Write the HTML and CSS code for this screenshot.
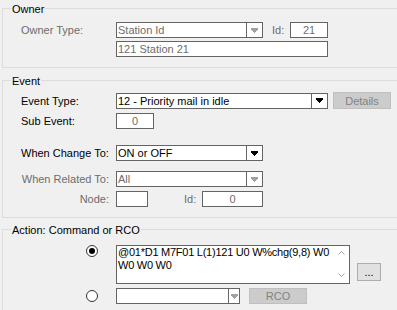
FILE: index.html
```html
<!DOCTYPE html>
<html>
<head>
    <link rel="stylesheet" href="styles.css">
</head>
<body>
<fieldset class="group group-owner">
    <legend>Owner</legend>
    <div class="group-body owner-body">
        <div class="row">
            <span class="label disabled">Owner Type:</span>
            <div class="combo combo-mid is-disabled">
                <span class="combo-text">Station Id</span>
                <span class="combo-btn">
                    <svg width="7" height="5" viewBox="0 0 7 5"><rect x="0" y="0" width="7" height="2"/><rect x="1" y="2" width="5" height="1"/><rect x="2" y="3" width="3" height="1"/><rect x="3" y="4" width="1" height="1"/></svg>
                </span>
            </div>
            <span class="label-id disabled">Id:</span>
            <div class="field field-id is-disabled">21</div>
        </div>
        <div class="row row-station">
            <div class="field field-wide is-disabled text-left">121 Station 21</div>
        </div>
    </div>
</fieldset>

<fieldset class="group group-event">
    <legend>Event</legend>
    <div class="group-body event-body">
        <div class="row row-type">
            <span class="label">Event Type:</span>
            <div class="combo combo-wide">
                <span class="combo-text">12 - Priority mail in idle</span>
                <span class="combo-btn">
                    <svg width="7" height="5" viewBox="0 0 7 5"><rect x="0" y="0" width="7" height="2"/><rect x="1" y="2" width="5" height="1"/><rect x="2" y="3" width="3" height="1"/><rect x="3" y="4" width="1" height="1"/></svg>
                </span>
            </div>
            <button class="btn btn-details" disabled>Details</button>
        </div>
        <div class="row row-sub">
            <span class="label">Sub Event:</span>
            <div class="field field-sub is-disabled">0</div>
        </div>
        <div class="row row-change">
            <span class="label">When Change To:</span>
            <div class="combo combo-mid">
                <span class="combo-text">ON or OFF</span>
                <span class="combo-btn">
                    <svg width="7" height="5" viewBox="0 0 7 5"><rect x="0" y="0" width="7" height="2"/><rect x="1" y="2" width="5" height="1"/><rect x="2" y="3" width="3" height="1"/><rect x="3" y="4" width="1" height="1"/></svg>
                </span>
            </div>
        </div>
        <div class="row row-related">
            <span class="label label-right disabled">When Related To:</span>
            <div class="combo combo-mid is-disabled">
                <span class="combo-text">All</span>
                <span class="combo-btn">
                    <svg width="7" height="5" viewBox="0 0 7 5"><rect x="0" y="0" width="7" height="2"/><rect x="1" y="2" width="5" height="1"/><rect x="2" y="3" width="3" height="1"/><rect x="3" y="4" width="1" height="1"/></svg>
                </span>
            </div>
        </div>
        <div class="row row-node">
            <span class="label label-right disabled">Node:</span>
            <div class="field field-node"></div>
            <span class="label-id label-node-id disabled">Id:</span>
            <div class="field field-node-id is-disabled">0</div>
        </div>
    </div>
</fieldset>

<fieldset class="group group-action">
    <legend>Action: Command or RCO</legend>
    <div class="group-body action-body">
        <div class="row row-command">
            <input type="radio" class="radio radio-top" name="action" checked>
            <div class="memo">
                <div class="memo-text">@01*D1 M7F01 L(1)121 U0 W%chg(9,8) W0 W0 W0 W0</div>
                <div class="memo-scroll">
                    <svg width="7" height="4" viewBox="0 0 7 4"><path d="M0.5 3.5 L3.5 0.5 L6.5 3.5"/></svg>
                    <svg width="7" height="4" viewBox="0 0 7 4"><path d="M0.5 0.5 L3.5 3.5 L6.5 0.5"/></svg>
                </div>
            </div>
            <button class="btn btn-more">...</button>
        </div>
        <div class="row row-rco">
            <input type="radio" class="radio" name="action">
            <div class="combo combo-rco">
                <span class="combo-text"></span>
                <span class="combo-btn combo-btn-small is-disabled">
                    <svg width="7" height="5" viewBox="0 0 7 5"><rect x="0" y="0" width="7" height="2"/><rect x="1" y="2" width="5" height="1"/><rect x="2" y="3" width="3" height="1"/><rect x="3" y="4" width="1" height="1"/></svg>
                </span>
            </div>
            <button class="btn btn-rco" disabled>RCO</button>
        </div>
    </div>
</fieldset>
</body>
</html>
```

FILE: styles.css
```css
* {
    box-sizing: border-box;
}

html, body {
    margin: 0;
    padding: 0;
}

body {
    width: 397px;
    height: 310px;
    overflow: hidden;
    background: #f0f0f0;
    font-family: "Liberation Sans", Arial, sans-serif;
    font-size: 11px;
    color: #000;
}

/* Group boxes */
.group {
    width: 400px;
    margin: 0 0 0 2px;
    padding: 0;
    border: 1px solid #dcdcdc;
    min-width: 0;
}

.group legend {
    height: 15px;
    line-height: 16px;
    padding: 0 1px;
    margin-left: 8px;
    font-size: 11px;
}

.group-owner {
    margin-top: 1px;
}

.group-event {
    margin-top: 5px;
}

.group-action {
    margin-top: 4px;
}

.group-body {
    padding-left: 18px;
}

.owner-body {
    padding-top: 6px;
    padding-bottom: 10px;
}

.event-body {
    padding-top: 4px;
    padding-bottom: 10px;
}

.action-body {
    padding-top: 8px;
    padding-bottom: 6px;
}

/* Rows */
.row {
    display: flex;
    align-items: center;
    height: 16px;
}

.row-station {
    margin-top: 3px;
    padding-left: 95px;
}

.row-type {
    height: 17px;
}

.row-sub {
    margin-top: 4px;
}

.row-change {
    margin-top: 16px;
}

.row-related {
    margin-top: 10px;
}

.row-node {
    margin-top: 4px;
}

.row-command {
    height: 39px;
    align-items: flex-start;
}

.row-rco {
    margin-top: 4px;
}

/* Labels */
.label {
    width: 95px;
    flex-shrink: 0;
    white-space: nowrap;
}

.label-right {
    text-align: right;
    padding-right: 7px;
}

.label-id {
    width: 18px;
    margin-left: 9px;
}

.label-node-id {
    margin-left: 36px;
}

.disabled {
    color: #6d6d6d;
}

/* Text fields */
.field {
    height: 16px;
    line-height: 14px;
    border: 1px solid #646464;
    background: #fff;
    text-align: center;
    white-space: nowrap;
}

.field.is-disabled {
    color: #6d6d6d;
}

.text-left {
    text-align: left;
    padding-left: 1px;
}

.field-id {
    width: 38px;
}

.field-wide {
    width: 212px;
}

.field-sub {
    width: 38px;
}

.field-node {
    width: 32px;
}

.field-node-id {
    width: 61px;
}

/* Combo boxes */
.combo {
    display: flex;
    height: 16px;
    border: 1px solid #646464;
    background: #fff;
}

.combo-text {
    flex: 1;
    padding-left: 1px;
    line-height: 14px;
    white-space: nowrap;
    overflow: hidden;
}

.combo.is-disabled .combo-text {
    color: #6d6d6d;
}

.combo-btn {
    width: 16px;
    flex-shrink: 0;
    border-left: 1px solid #646464;
    display: flex;
    align-items: center;
    justify-content: center;
}

.combo-btn svg {
    fill: #000;
}

.combo.is-disabled .combo-btn svg,
.combo-btn.is-disabled svg {
    fill: #a0a0a0;
}

.combo-mid {
    width: 147px;
}

.combo-wide {
    width: 212px;
}

.combo-rco {
    width: 124px;
}

.combo-btn-small {
    width: 11px;
}

/* Buttons */
.btn {
    font-family: inherit;
    font-size: 11px;
    padding: 0;
    border: 1px solid #adadad;
    background: #e1e1e1;
    color: #000;
}

.btn:disabled {
    background: #cccccc;
    border-color: #bfbfbf;
    color: #838383;
}

.btn-details {
    width: 58px;
    height: 17px;
    margin-left: 5px;
}

.btn-more {
    width: 24px;
    height: 18px;
    margin-left: 7px;
    align-self: flex-end;
    margin-bottom: 3px;
    line-height: 12px;
}

.btn-rco {
    width: 58px;
    height: 16px;
    margin-left: 9px;
}

/* Radio buttons */
.radio {
    appearance: none;
    -webkit-appearance: none;
    width: 12px;
    height: 12px;
    margin: 0 18px 0 65px;
    border: 1px solid #333;
    border-radius: 50%;
    background: #fff;
    display: flex;
    align-items: center;
    justify-content: center;
    flex-shrink: 0;
}

.radio:checked::after {
    content: "";
    width: 6px;
    height: 6px;
    border-radius: 50%;
    background: #000;
}

.radio-top {
    margin-top: 0;
}

/* Multi-line command box */
.memo {
    display: flex;
    width: 234px;
    height: 39px;
    border: 1px solid #646464;
    background: #fff;
}

.memo-text {
    flex: 1;
    padding: 0 0 0 1px;
    line-height: 13px;
    letter-spacing: -0.25px;
    overflow: hidden;
}

.memo-scroll {
    width: 16px;
    display: flex;
    flex-direction: column;
    justify-content: space-between;
    align-items: center;
    padding: 5px 0 6px;
}

.memo-scroll svg {
    fill: none;
    stroke: #a6a6a6;
    stroke-width: 1;
}
```
